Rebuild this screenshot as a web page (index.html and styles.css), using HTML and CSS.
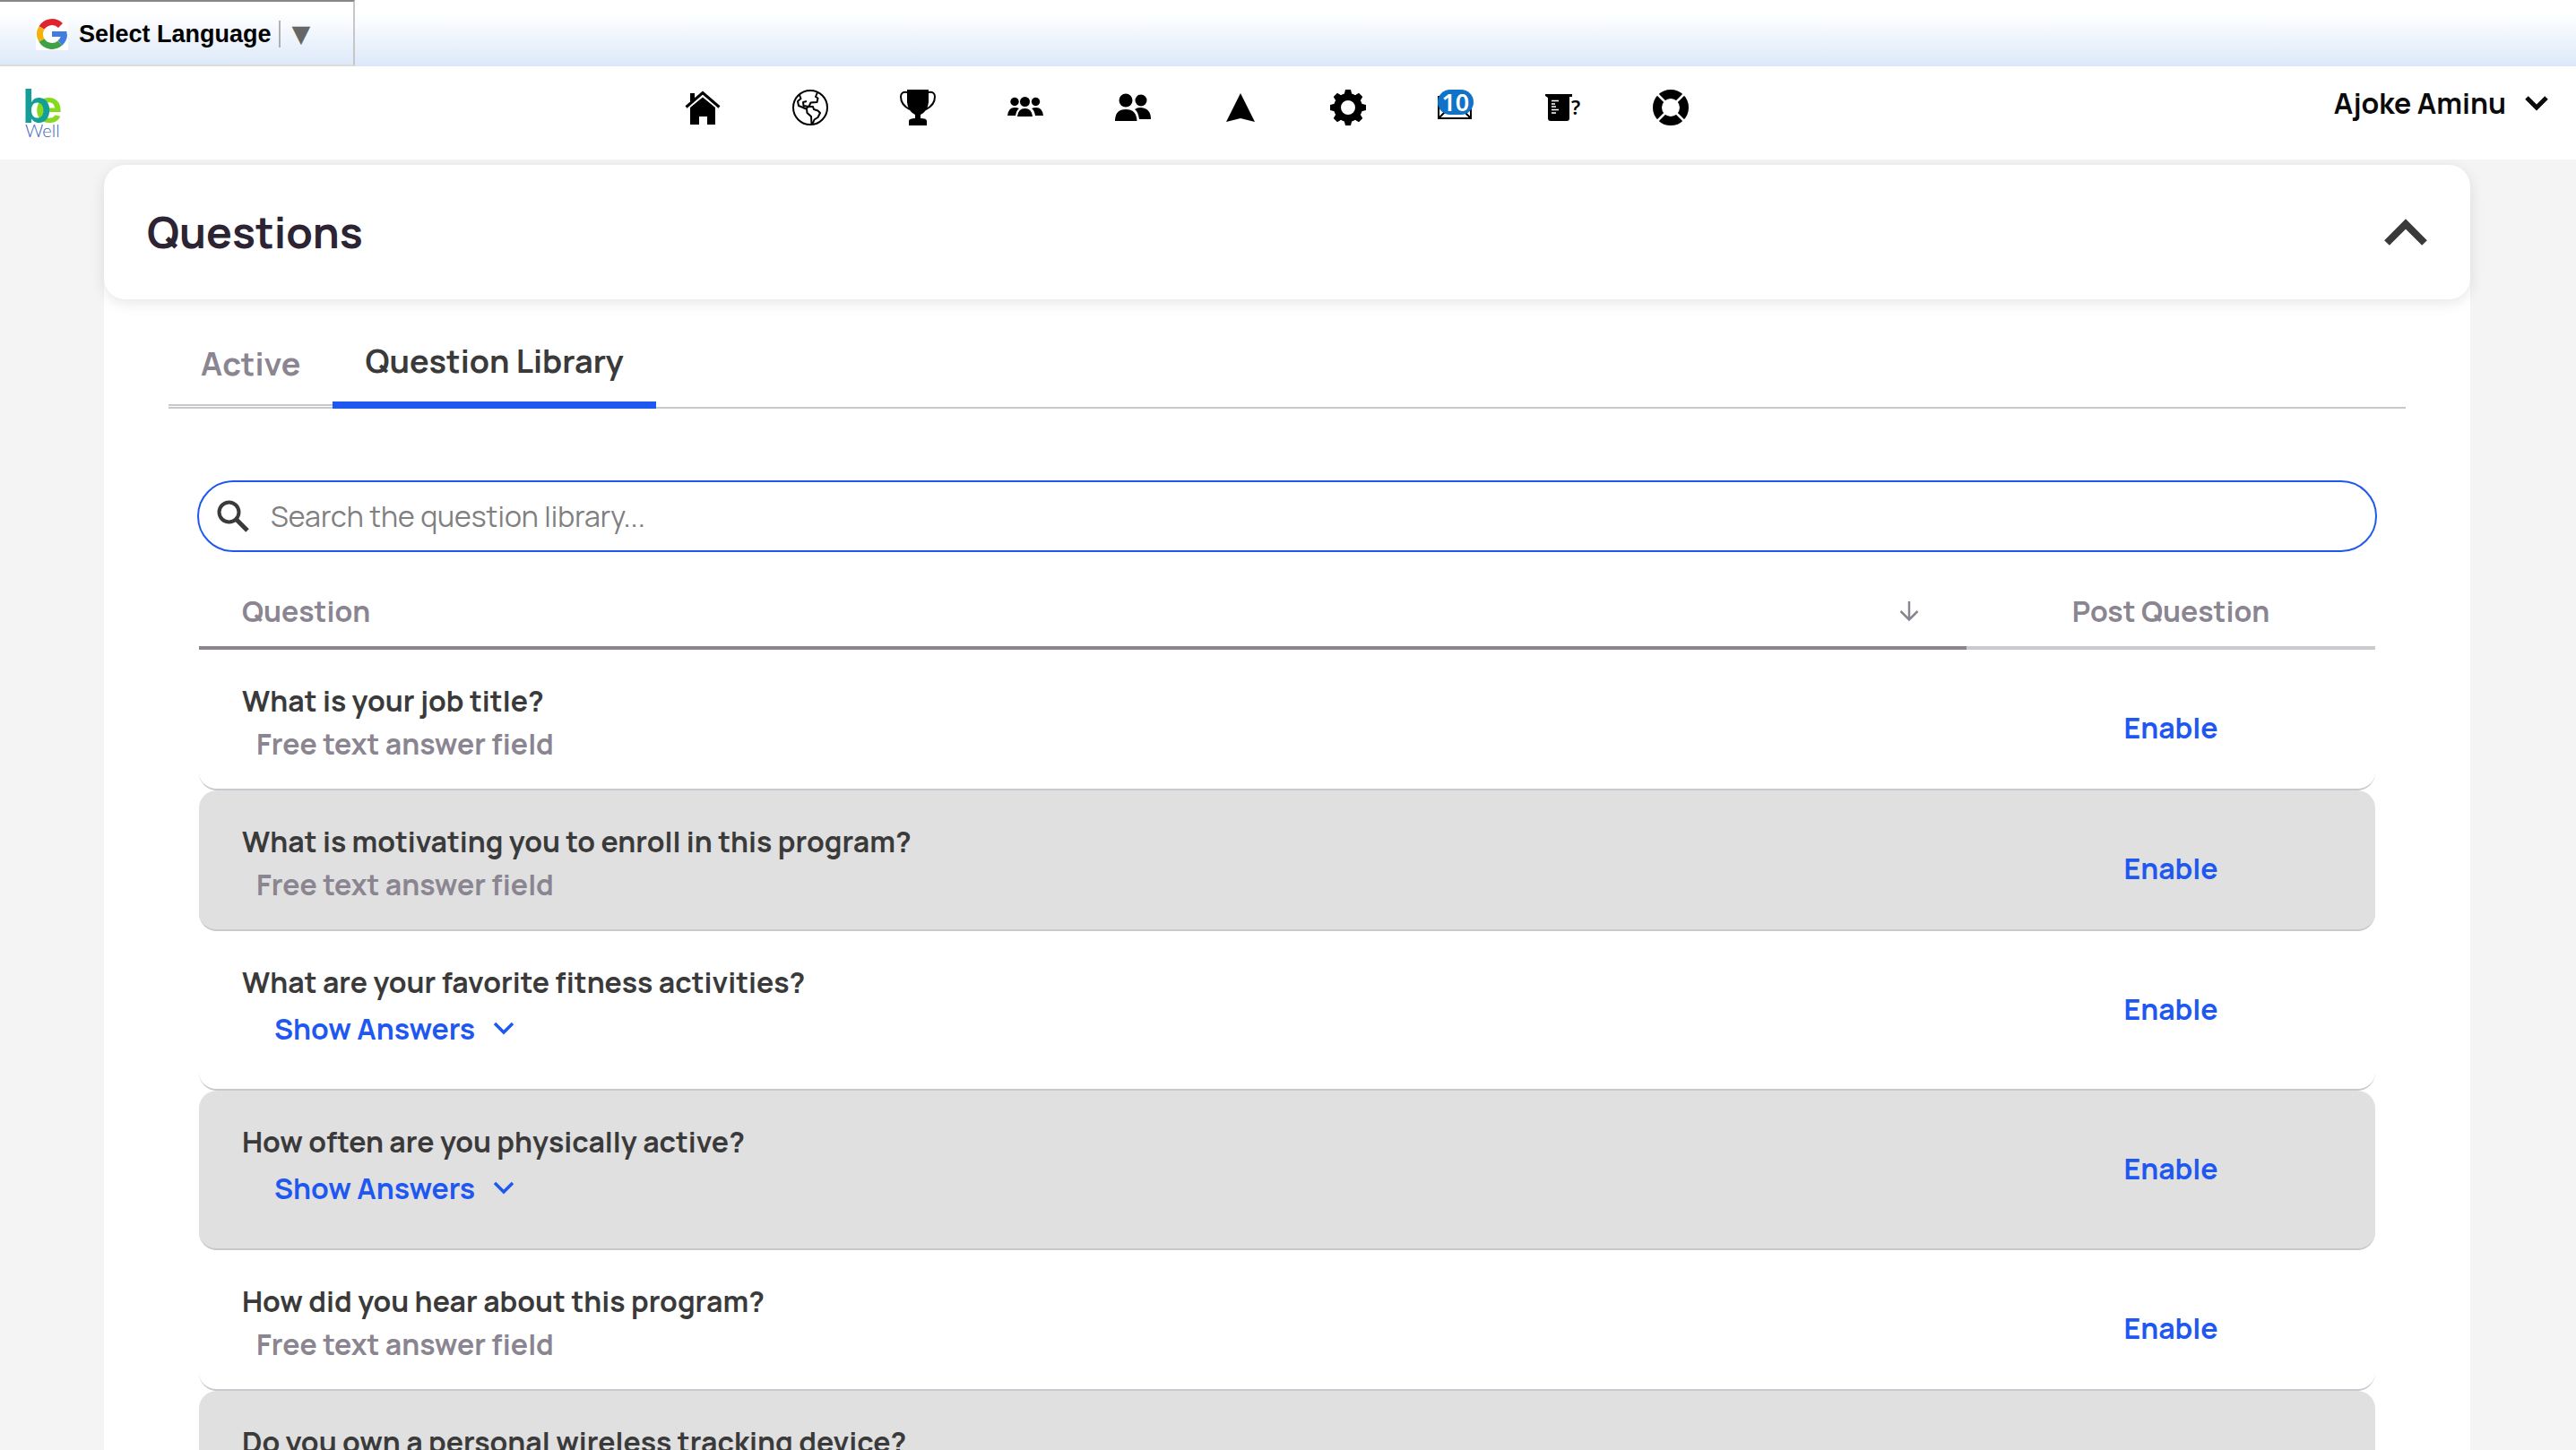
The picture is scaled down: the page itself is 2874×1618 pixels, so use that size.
FILE: index.html
```
<!DOCTYPE html>
<html lang="en">
<head>
    <meta charset="UTF-8">
    <meta name="viewport" content="width=device-width, initial-scale=1.0">
    <title>Questions</title>
    <link rel="stylesheet" href="styles.css">
</head>
<body>
    <div class="translate-bar">
        <button type="button" class="translate-widget">
            <svg class="google-icon" viewBox="0 0 36 36" aria-hidden="true">
                <g fill="none" stroke-width="7">
                    <path d="M27.500 8.500A13.500 13.500 0 0 0 6.500 11" stroke="#e0242f"/>
                    <path d="M6.500 11A13.500 13.500 0 0 0 6.500 25" stroke="#f4b20a"/>
                    <path d="M6.500 25A13.500 13.500 0 0 0 27 28" stroke="#3fa044"/>
                    <path d="M27 28A13 13 0 0 0 31.500 18" stroke="#3f7de0"/>
                </g>
                <path d="M18 15H34.500V21H18Z" fill="#3f7de0"/>
            </svg>
            <span class="translate-label">Select Language</span>
            <span class="translate-arrow">▼</span>
        </button>
    </div>

    <header class="site-header">
        <a href="#" class="logo" aria-label="be Well">
            <svg viewBox="0 0 54 66" aria-hidden="true">
                <text class="logo-e" x="15" y="43">e</text>
                <text class="logo-b" x="1" y="43">b</text>
                <text class="logo-well" x="4" y="59">Well</text>
            </svg>
        </a>

        <nav class="main-nav">
            <a href="#" aria-label="Home">
                <svg viewBox="0 0 40 40">
                    <path d="M6 4h5v6l-5 4z"/>
                    <path d="M1.500 19.500L20 3.500l18.500 16" fill="none" stroke="#000" stroke-width="3"/>
                    <path d="M6 20L20 8.500 34 20v19h-9v-9h-9v9H6z"/>
                </svg>
            </a>
            <a href="#" aria-label="Community">
                <svg viewBox="0 0 40 40">
                    <g fill="none" stroke="#000" stroke-width="2" stroke-linejoin="round">
                        <circle cx="20" cy="20" r="19"/>
                        <path d="M8 6l1.500 4L6 13l1 5 5 2 3 1.500M28 3l-2 5 2.500 1.500-1 4.500-7 .5-2 4.500-3-.5-3-.5-.5-4 4-1"/>
                        <path d="M15 21.500l3-2.500h5l1 3 4.500 1.500 2.500 2.500-2.500 5-4 2.500-2 5M16 21.500l.5 4.500 4.500 4 .5 9"/>
                    </g>
                </svg>
            </a>
            <a href="#" aria-label="Challenges">
                <svg viewBox="0 0 40 40">
                    <path d="M8 0h24v14q-1 10-9 14v4q7 0 7 3v5H10v-5q0-3 7-3v-4Q9 24 8 14z"/>
                    <path d="M8 3Q1 2 1 8q0 9 10 14M32 3q7-1 7 5 0 9-10 14" fill="none" stroke="#000" stroke-width="2"/>
                </svg>
            </a>
            <a href="#" aria-label="Groups">
                <svg viewBox="0 0 40 40">
                    <circle cx="8" cy="13.500" r="4.700"/>
                    <circle cx="19.500" cy="13.500" r="5.500"/>
                    <circle cx="31.500" cy="13.500" r="4.700"/>
                    <path d="M11 30q1-9 8.500-9t8.500 9zM0 29q1-9 8-9 3 0 5 1-3 2-4 8zM40 29q-1-9-8-9-3 0-5 1 3 2 4 8z"/>
                </svg>
            </a>
            <a href="#" aria-label="Members">
                <svg viewBox="0 0 40 40">
                    <circle cx="12" cy="12" r="7.500"/>
                    <circle cx="29" cy="12" r="6.500"/>
                    <path d="M0 35q0-13 12-13t12.500 13zM22 22q3-2 7-2 11 1 11 13H27q-1-8-5-11z"/>
                </svg>
            </a>
            <a href="#" aria-label="Navigate">
                <svg viewBox="0 0 40 40"><path d="M20 4l16 32-16-4-16 4z"/></svg>
            </a>
            <a href="#" aria-label="Settings">
                <svg viewBox="0 0 40 40">
                    <circle cx="20" cy="20" r="12" fill="none" stroke="#000" stroke-width="8"/>
                    <path id="tooth" d="M15.500 6l1.500-6h6l1.500 6zM15.500 34l1.500 6h6l1.500-6z"/>
                    <use href="#tooth" transform="rotate(45 20 20)"/>
                    <use href="#tooth" transform="rotate(90 20 20)"/>
                    <use href="#tooth" transform="rotate(135 20 20)"/>
                </svg>
            </a>
            <a href="#" class="mail" aria-label="Messages">
                <svg viewBox="0 0 40 40">
                    <path d="M1 8h36v24H1zM1 32l12-12M37 32L25 20" fill="none" stroke="#000" stroke-width="2"/>
                </svg>
                <span class="badge">10</span>
            </a>
            <a href="#" aria-label="Quizzes">
                <svg viewBox="0 0 40 40">
                    <path d="M0 5h30v3h-3v24q0 3-3 3H6q-3 0-3-3V9L0 7z"/>
                    <path d="M7 12.500h8M7 16h4M7 19h5M7 22.500h8M7 26h5" stroke="#fff" stroke-width="1.500"/>
                    <text class="quiz-mark" x="29" y="28">?</text>
                </svg>
            </a>
            <a href="#" aria-label="Help">
                <svg viewBox="0 0 40 40">
                    <circle cx="20" cy="20" r="15" fill="none" stroke="#000" stroke-width="10"/>
                    <path d="M4 4l32 32M36 4L4 36" stroke="#fff" stroke-width="2.500"/>
                </svg>
            </a>
        </nav>

        <button type="button" class="user-menu">
            Ajoke Aminu
            <svg class="user-chevron" viewBox="0 0 28 20" aria-hidden="true">
                <path d="M3 4l11 11L25 4" fill="none" stroke="#0b0b0b" stroke-width="5"/>
            </svg>
        </button>
    </header>

    <main class="content">
        <section class="panel">
            <div class="panel-header">
                <h1>Questions</h1>
                <button type="button" class="collapse-btn" aria-label="Collapse">
                    <svg viewBox="0 0 48 30"><path d="M3 27L24 6l21 21" fill="none" stroke="#3a3a3a" stroke-width="8"/></svg>
                </button>
            </div>

            <div class="panel-body">
                <div class="tabs" role="tablist">
                    <button type="button" class="tab" role="tab">Active</button>
                    <button type="button" class="tab tab-active" role="tab" aria-selected="true">Question Library</button>
                </div>

                <div class="library">
                    <div class="search-box">
                        <svg class="search-icon" viewBox="0 0 36 36" aria-hidden="true">
                            <g fill="none" stroke="#3a3a3a">
                                <circle cx="13.500" cy="13.500" r="11" stroke-width="4"/>
                                <path d="M21.500 21.500L34 34" stroke-width="5"/>
                            </g>
                        </svg>
                        <input type="text" placeholder="Search the question library..." aria-label="Search the question library">
                    </div>

                    <table class="question-table">
                        <thead>
                            <tr>
                                <th class="col-question">
                                    <div class="sort-header">
                                        Question
                                        <svg class="sort-icon" viewBox="0 0 22 22" aria-hidden="true">
                                            <path d="M11 0v20M1.500 11l9.500 9.500 9.500-9.500" fill="none" stroke="#8a8590" stroke-width="2.500"/>
                                        </svg>
                                    </div>
                                </th>
                                <th class="col-post">Post Question</th>
                            </tr>
                        </thead>
                        <tbody>
                            <tr>
                                <td>
                                    <div class="question">What is your job title?</div>
                                    <div class="answer-type">Free text answer field</div>
                                </td>
                                <td><button type="button" class="enable-btn">Enable</button></td>
                            </tr>
                            <tr>
                                <td>
                                    <div class="question">What is motivating you to enroll in this program?</div>
                                    <div class="answer-type">Free text answer field</div>
                                </td>
                                <td><button type="button" class="enable-btn">Enable</button></td>
                            </tr>
                            <tr>
                                <td>
                                    <div class="question">What are your favorite fitness activities?</div>
                                    <button type="button" class="show-answers">Show Answers
                                        <svg viewBox="0 0 24 16"><path d="M2 2l10 10L22 2" fill="none" stroke="#1f58f0" stroke-width="3.500"/></svg>
                                    </button>
                                </td>
                                <td><button type="button" class="enable-btn">Enable</button></td>
                            </tr>
                            <tr>
                                <td>
                                    <div class="question">How often are you physically active?</div>
                                    <button type="button" class="show-answers">Show Answers
                                        <svg viewBox="0 0 24 16"><path d="M2 2l10 10L22 2" fill="none" stroke="#1f58f0" stroke-width="3.500"/></svg>
                                    </button>
                                </td>
                                <td><button type="button" class="enable-btn">Enable</button></td>
                            </tr>
                            <tr>
                                <td>
                                    <div class="question">How did you hear about this program?</div>
                                    <div class="answer-type">Free text answer field</div>
                                </td>
                                <td><button type="button" class="enable-btn">Enable</button></td>
                            </tr>
                            <tr>
                                <td>
                                    <div class="question">Do you own a personal wireless tracking device?</div>
                                </td>
                                <td></td>
                            </tr>
                        </tbody>
                    </table>
                </div>
            </div>
        </section>
    </main>
</body>
</html>
```
FILE: styles.css
```
* {
    box-sizing: border-box;
}

body {
    margin: 0;
    height: 100vh;
    display: flex;
    flex-direction: column;
    overflow: hidden;
    background-color: #f4f4f4;
    color: #3a3a3a;
    font-family: Manrope, Inter, sans-serif;
    font-size: 32px;
    font-weight: 700;
    line-height: 48px;
}

button {
    padding: 0;
    border: none;
    background: none;
    color: inherit;
    font: inherit;
    cursor: pointer;
}

svg {
    display: block;
}

/* Language bar */
.translate-bar {
    flex: none;
    height: 74px;
    background: linear-gradient(#ffffff 20%, #dce8f9);
}

.translate-widget {
    display: flex;
    align-items: center;
    width: 396px;
    height: 74px;
    padding: 2px 0 0 40px;
    border: 2px solid #c7c7c7;
    border-top-color: #868686;
    border-bottom-color: #dcdcdc;
    border-left: none;
    font-family: "Liberation Sans", Arial, sans-serif;
    font-size: 27px;
    font-weight: 700;
    color: #000;
}

.google-icon {
    width: 36px;
    height: 36px;
    margin-right: 12px;
    background: #fff;
}

.translate-arrow {
    margin-left: 8px;
    padding-left: 13px;
    border-left: 2px solid #b0b0b0;
    font-family: "DejaVu Sans", sans-serif;
    font-size: 27px;
    font-weight: 400;
    line-height: 30px;
    color: #666;
}

/* Header */
.site-header {
    flex: none;
    display: flex;
    justify-content: space-between;
    align-items: flex-start;
    height: 104px;
    padding: 20px 30px 0 24px;
    background: #fff;
}

.logo svg {
    width: 54px;
    height: 66px;
}

.logo-b,
.logo-e {
    font-family: Inter, sans-serif;
    font-size: 52px;
    font-weight: 600;
}

.logo-b {
    fill: #159e98;
}

.logo-e {
    fill: #86d91c;
}

.logo-well {
    font-family: Lato, sans-serif;
    font-size: 20px;
    font-weight: 300;
    fill: #3c66b5;
}

.main-nav {
    display: flex;
    gap: 80px;
    padding-top: 6px;
}

.main-nav svg {
    width: 40px;
    height: 40px;
}

.mail {
    position: relative;
}

.badge {
    position: absolute;
    top: 0;
    left: 0;
    width: 40px;
    height: 28px;
    border-radius: 14px;
    background: #1073c8;
    color: #fff;
    font-family: "Noto Sans", sans-serif;
    font-size: 27px;
    font-weight: 600;
    line-height: 28px;
    text-align: center;
}

.quiz-mark {
    font-family: "Noto Sans", sans-serif;
    font-size: 22px;
    font-weight: 600;
}

.user-menu {
    display: flex;
    align-items: center;
    gap: 20px;
    height: 42px;
    padding-left: 34px;
    color: #0b0b0b;
}

.user-chevron {
    width: 28px;
    height: 20px;
}

/* Questions panel */
.content {
    flex: 1;
    min-height: 0;
    overflow-y: auto;
    scrollbar-width: none;
    padding: 6px 118px 0 116px;
}

.panel-header {
    position: relative;
    display: flex;
    justify-content: space-between;
    align-items: center;
    height: 150px;
    padding: 0 48px;
    border-radius: 24px;
    background: #fff;
    box-shadow: 0 4px 16px rgba(0, 0, 0, 0.1);
}

h1 {
    margin: 0;
    font-size: 48px;
    font-weight: 700;
    color: #2c2433;
}

.collapse-btn svg {
    width: 48px;
    height: 30px;
}

.panel-body {
    margin-top: -24px;
    padding: 48px 72px 0;
    background: #fff;
}

.tabs {
    display: flex;
    align-items: flex-end;
    height: 98px;
    border-bottom: 2px solid #c9c8cf;
}

.tab {
    height: 92px;
    margin-bottom: 1px;
    padding: 0 36px;
    border-bottom: 2px solid #c9c8cf;
    font-size: 36px;
    color: #8a8590;
}

.tab-active {
    height: 98px;
    margin-bottom: -2px;
    border-bottom: 8px solid #1f58f0;
    color: #3a3a3a;
}

.library {
    padding: 80px 32px 0;
}

.search-box {
    display: flex;
    align-items: center;
    gap: 24px;
    height: 80px;
    padding: 0 20px;
    border: 2px solid #1f58f0;
    border-radius: 40px;
}

.search-icon {
    width: 36px;
    height: 36px;
}

.search-box input {
    flex: 1;
    padding: 0;
    border: none;
    outline: none;
    background: none;
    font: inherit;
    font-weight: 400;
}

.search-box input::placeholder {
    color: #808080;
}

/* Question table */
.question-table {
    width: calc(100% - 4px);
    margin: 0 2px;
    border-spacing: 0;
    table-layout: fixed;
}

th {
    height: 109px;
    padding: 27px 48px 0;
    border-bottom: 4px solid #cbcacf;
    font-weight: 700;
    color: #8a8590;
}

.col-question {
    border-color: #8a8590;
}

.col-post {
    width: 456px;
    padding: 27px 0 0;
}

.sort-header {
    display: flex;
    justify-content: space-between;
    align-items: center;
}

.sort-icon {
    width: 22px;
    height: 22px;
    margin-right: 5px;
}

td {
    padding: 33px 48px 26px;
    border-bottom: 2px solid #c9c8cf;
    vertical-align: top;
}

td:first-child {
    border-radius: 20px 0 0 20px;
}

td:last-child {
    border-radius: 0 20px 20px 0;
    padding: 63px 0 0;
    text-align: center;
}

tr:nth-child(even) td {
    background: #e0e0e0;
}

.answer-type {
    padding-left: 16px;
    color: #8a8590;
}

.show-answers {
    display: flex;
    align-items: center;
    gap: 20px;
    margin: 4px 0 17px 36px;
    color: #1f58f0;
}

.show-answers svg {
    width: 24px;
    height: 16px;
}

.enable-btn {
    display: block;
    margin: 0 auto;
    color: #1f58f0;
}
```
